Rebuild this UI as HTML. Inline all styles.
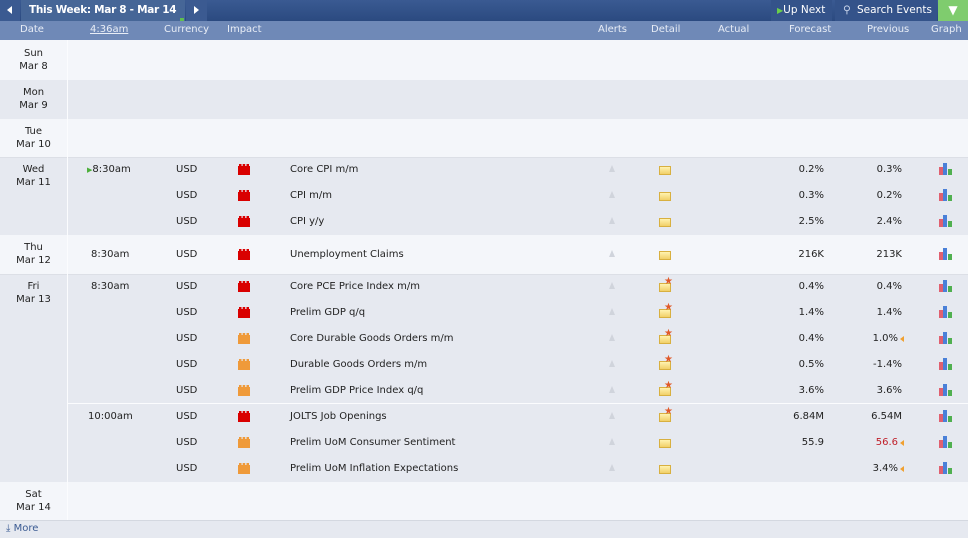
<!DOCTYPE html><html><head><meta charset="utf-8"><style>
*{margin:0;padding:0;box-sizing:border-box}
body{width:968px;height:538px;overflow:hidden;background:#f3f5f9;font-family:"DejaVu Sans","Liberation Sans",sans-serif;font-size:10px;color:#222;position:relative}
.a{position:absolute;white-space:nowrap}
.top{left:0;top:0;width:968px;height:21px;background:linear-gradient(#3a5a92,#2b4a80)}
.hdr{left:0;top:21px;width:968px;height:19px;background:#6f89b7;color:#e8edf6;font-size:10px}
.hdr span{position:absolute;top:3px}
.band{left:0;width:968px}
.dl{position:absolute;left:0;width:67px;text-align:center;line-height:13px;color:#222}
.imp{position:absolute;width:12px;height:9px}
.red{background:#d90000}.org{background:#ef9a3a}
.imp:before{content:"";position:absolute;left:1px;top:-2px;width:10px;height:2px;background:inherit;clip-path:polygon(0 100%,0 0,25% 0,25% 100%,37% 100%,37% 0,62% 0,62% 100%,75% 100%,75% 0,100% 0,100% 100%)}
.fold{position:absolute;width:12px;height:9px;background:linear-gradient(#fff3b0,#f1d068);border:1px solid #d8b040}
.star{position:absolute;color:#e05a2a;font-size:10px;line-height:10px}
.bell{position:absolute;width:0;height:0;border-left:3px solid transparent;border-right:3px solid transparent;border-bottom:7px solid #d0d4dc}
.gr{position:absolute;width:15px;height:12px}
.gr i{position:absolute;bottom:0;width:4px}
.tri{position:absolute;width:0;height:0;border-top:3px solid transparent;border-bottom:3px solid transparent;border-right:4px solid #f0a030}
</style></head><body>
<div class="a top"></div>
<div class="a" style="left:0;top:0;width:20px;height:21px;background:#3b5a91"></div>
<div class="a" style="left:7px;top:6px;border-top:4px solid transparent;border-bottom:4px solid transparent;border-right:5px solid #fff;width:0;height:0"></div>
<div class="a" style="left:21px;top:0;width:164px;height:21px;background:#466697;color:#fff;font-weight:bold;font-size:10.5px;padding:4px 0 0 8px;letter-spacing:-0.3px">This Week: Mar 8 - Mar 14</div>
<div class="a" style="left:180px;top:18px;width:4px;height:3px;background:#5fbf4f"></div>
<div class="a" style="left:186px;top:0;width:21px;height:21px;background:#3b5a91"></div>
<div class="a" style="left:194px;top:6px;border-top:4px solid transparent;border-bottom:4px solid transparent;border-left:5px solid #fff;width:0;height:0"></div>
<div class="a" style="left:771px;top:0;width:61px;height:21px;background:#34538a;color:#fff;font-size:10.5px;padding:4px 0 0 6px"><span style="color:#6ad04a;font-size:8px">▶</span>Up Next</div>
<div class="a" style="left:835px;top:0;width:102px;height:21px;background:#34538a;color:#fff;font-size:10.5px;padding:4px 0 0 8px"><span style="color:#c8d4ea;display:inline-block;width:14px">⚲</span>Search Events</div>
<div class="a" style="left:938px;top:0;width:30px;height:21px;background:#7fcc6e;color:#fff;text-align:center;font-size:12px;line-height:21px">▼</div>
<div class="a hdr">
<span style="left:20px">Date</span><span style="left:90px;text-decoration:underline">4:36am</span><span style="left:164px">Currency</span><span style="left:227px">Impact</span><span style="left:598px">Alerts</span><span style="left:651px">Detail</span><span style="left:718px">Actual</span><span style="left:789px">Forecast</span><span style="left:867px">Previous</span><span style="left:931px">Graph</span></div>
<div class="a band" style="top:40px;height:40px;background:#f4f6fa"></div>
<div class="a band" style="top:80px;height:39px;background:#e6e9f0"></div>
<div class="a band" style="top:119px;height:38px;background:#f4f6fa"></div>
<div class="a band" style="top:157px;height:78px;background:#e6e9f0;border-top:1px solid #dcdfe6"></div>
<div class="a band" style="top:235px;height:39px;background:#f4f6fa"></div>
<div class="a band" style="top:274px;height:208px;background:#e6e9f0;border-top:1px solid #dcdfe6"></div>
<div class="a band" style="top:482px;height:38px;background:#f4f6fa"></div>
<div class="a band" style="top:520px;height:18px;background:#e6e9f0;border-top:1px solid #d4d8e0"></div>
<div class="a" style="left:67px;top:40px;width:1px;height:480px;background:#fbfcfe"></div>
<div class="a" style="left:68px;top:403px;width:900px;height:1px;background:#fbfcfe"></div>
<div class="a" style="left:6px;top:523px;color:#3a5a92;font-size:10px">⤓ More</div>
<div class="dl" style="top:47px">Sun<br>Mar 8</div>
<div class="dl" style="top:86px">Mon<br>Mar 9</div>
<div class="dl" style="top:125px">Tue<br>Mar 10</div>
<div class="dl" style="top:163px">Wed<br>Mar 11</div>
<div class="dl" style="top:241px">Thu<br>Mar 12</div>
<div class="dl" style="top:280px">Fri<br>Mar 13</div>
<div class="dl" style="top:488px">Sat<br>Mar 14</div>
<div class="a" style="left:87px;top:164px"><span style="color:#4caf3a;font-size:7px">▶</span>8:30am</div>
<div class="a" style="left:91px;top:249px">8:30am</div>
<div class="a" style="left:91px;top:281px">8:30am</div>
<div class="a" style="left:88px;top:411px">10:00am</div>
<div id="rows"></div>
<script>
var R=[[169,'r','Core CPI m/m','0.2%','0.3%',0,0,''],[195,'r','CPI m/m','0.3%','0.2%',0,0,''],[221,'r','CPI y/y','2.5%','2.4%',0,0,''],[254,'r','Unemployment Claims','216K','213K',0,0,''],[286,'r','Core PCE Price Index m/m','0.4%','0.4%',1,0,''],[312,'r','Prelim GDP q/q','1.4%','1.4%',1,0,''],[338,'o','Core Durable Goods Orders m/m','0.4%','1.0%',1,1,''],[364,'o','Durable Goods Orders m/m','0.5%','-1.4%',1,0,''],[390,'o','Prelim GDP Price Index q/q','3.6%','3.6%',1,0,''],[416,'r','JOLTS Job Openings','6.84M','6.54M',1,0,''],[442,'o','Prelim UoM Consumer Sentiment','55.9','56.6',0,1,'#c0202a'],[468,'o','Prelim UoM Inflation Expectations','','3.4%',0,1,'']];
var h='';R.forEach(function(r){var y=r[0];
h+='<div class="a" style="left:176px;top:'+(y-5)+'px">USD</div>';
h+='<div class="imp '+(r[1]=='r'?'red':'org')+'" style="left:238px;top:'+(y-3)+'px"></div>';
h+='<div class="a" style="left:290px;top:'+(y-5)+'px">'+r[2]+'</div>';
h+='<div class="bell" style="left:609px;top:'+(y-4)+'px"></div>';
h+='<div class="fold" style="left:659px;top:'+(y-3)+'px"></div>';
if(r[5])h+='<div class="star" style="left:664px;top:'+(y-9)+'px">★</div>';
h+='<div class="a" style="right:144px;top:'+(y-5)+'px">'+r[3]+'</div>';
h+='<div class="a" style="right:'+(r[6]?70:66)+'px;top:'+(y-5)+'px;color:'+(r[7]||'#222')+'">'+r[4]+'</div>';
if(r[6])h+='<div class="tri" style="left:900px;top:'+(y-2)+'px"></div>';
h+='<div class="gr" style="left:939px;top:'+(y-6)+'px"><i style="left:0;height:8px;background:#e06070"></i><i style="left:4px;height:12px;background:#4a80d8"></i><i style="left:9px;height:6px;background:#50b050"></i></div>';
});document.getElementById('rows').innerHTML=h;
</script>
</body></html>
